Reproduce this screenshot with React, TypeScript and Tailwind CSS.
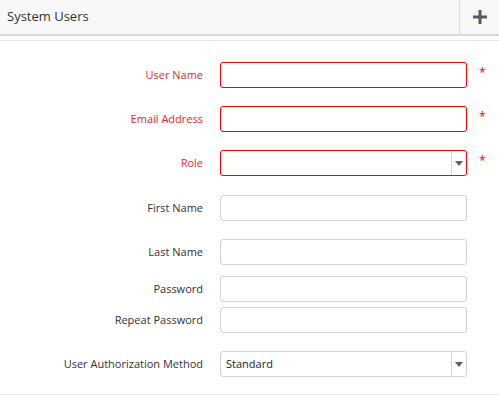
const font = { fontFamily: '"Open Sans", "Liberation Sans", sans-serif' }

type Field = {
  label: string
  required?: boolean
  select?: boolean
  value?: string
  mt: string
}

const fields: Field[] = [
  { label: "User Name", required: true, mt: "mt-[21px]" },
  { label: "Email Address", required: true, mt: "mt-[18px]" },
  { label: "Role", required: true, select: true, mt: "mt-[18px]" },
  { label: "First Name", mt: "mt-[19px]" },
  { label: "Last Name", mt: "mt-[18px]" },
  { label: "Password", mt: "mt-[11px]" },
  { label: "Repeat Password", mt: "mt-[5px]" },
  { label: "User Authorization Method", select: true, value: "Standard", mt: "mt-[18px]" },
]

const Arrow = () => (
  <svg width="8" height="5" viewBox="0 0 8 5" className="block">
    <path d="M0 0 H8 L4 5 Z" fill="#5b6070" />
  </svg>
)

const Row = ({ f }: { f: Field }) => (
  <div className={`flex items-center h-[26px] ${f.mt}`}>
    <label
      className={`w-[203px] text-right text-[11px] ${f.required ? "text-[#f0262e]" : "text-[#333]"}`}
    >
      {f.label}
    </label>
    <div
      className={`ml-[17px] w-[247px] h-[26px] rounded-[3px] border bg-white flex items-center ${
        f.required ? "border-[#f00]" : "border-[#d4d4d4]"
      }`}
    >
      <span className="flex-1 pl-[5px] text-[11px] text-[#222] pt-[1px]">{f.value}</span>
      {f.select && (
        <div className="w-[15px] h-full border-l border-[#d4d4d4] flex items-center justify-center">
          <Arrow />
        </div>
      )}
    </div>
    {f.required && (
      <span className="ml-[12px] -mt-[4px] text-[12px] text-[#f00] leading-none">*</span>
    )}
  </div>
)

export default function App() {
  return (
    <div className="w-[499px] h-[398px] bg-white overflow-hidden" style={font}>
      <div className="h-[36px] bg-[#f8f8f8] border-b-2 border-[#d6dce1] flex">
        <div className="flex-1 pl-[7px] pt-[7px] text-[13px] text-[#333]">System Users</div>
        <div className="w-[40px] border-l border-[#dcdcdc] flex items-center justify-center pl-[1px]">
          <svg width="14" height="14" viewBox="0 0 14 14">
            <path d="M5.5 0 H8.5 V5.5 H14 V8.5 H8.5 V14 H5.5 V8.5 H0 V5.5 H5.5 Z" fill="#545869" />
          </svg>
        </div>
      </div>
      <div className="mt-[4px] border-t border-[#e5e5e5]" />
      {fields.map((f) => (
        <Row key={f.label} f={f} />
      ))}
      <div className="mt-[17px] border-t border-[#e8e8e8]" />
    </div>
  )
}
